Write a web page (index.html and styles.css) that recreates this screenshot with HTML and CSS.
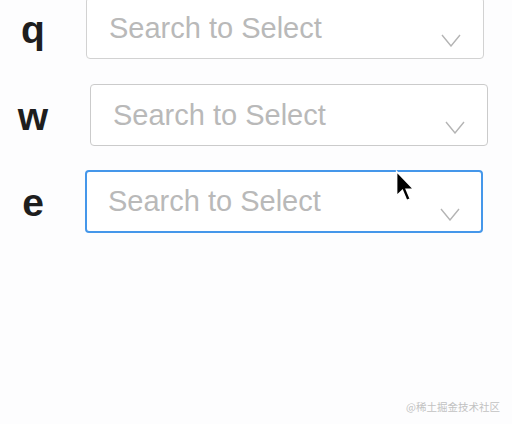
FILE: index.html
```html
<!DOCTYPE html>
<html lang="en">
<head>
<meta charset="utf-8">
<title>Search to Select</title>
<link rel="stylesheet" href="styles.css">
</head>
<body>
<div class="form">
  <div class="row">
    <div class="label">q</div>
    <div class="select select-a">
      <span class="placeholder">Search to Select</span>
      <svg class="arrow" width="20" height="13" viewBox="0 0 20 13"><path d="M1 1 L10 12 L19 1" fill="none" stroke="#b4b4b4" stroke-width="1.4"/></svg>
    </div>
  </div>
  <div class="row row-b">
    <div class="label">w</div>
    <div class="select select-b">
      <span class="placeholder">Search to Select</span>
      <svg class="arrow" width="20" height="13" viewBox="0 0 20 13"><path d="M1 1 L10 12 L19 1" fill="none" stroke="#b4b4b4" stroke-width="1.4"/></svg>
    </div>
  </div>
  <div class="row">
    <div class="label">e</div>
    <div class="select select-c focused">
      <span class="placeholder">Search to Select</span>
      <svg class="arrow" width="20" height="13" viewBox="0 0 20 13"><path d="M1 1 L10 12 L19 1" fill="none" stroke="#b4b4b4" stroke-width="1.4"/></svg>
    </div>
  </div>
</div>
<svg class="cursor" width="20" height="32" viewBox="0 0 13 21"><path d="M1 1 L1 17 L4.8 13.4 L7.6 20 L10 19 L7.3 12.6 L12.2 12.6 Z" fill="#000" stroke="#fff" stroke-width="1"/></svg>
<div class="watermark">@稀土掘金技术社区</div>
</body>
</html>
```
FILE: styles.css
```css
html, body {
  margin: 0;
  padding: 0;
  background: #fdfdfe;
  width: 512px;
  height: 424px;
  overflow: hidden;
  font-family: "Liberation Sans", Arial, sans-serif;
}
.form {
  display: flex;
  flex-direction: column;
  gap: 24px;
  margin-top: -3px;
}
.row {
  display: flex;
  align-items: center;
  height: 62px;
}
.row-b { margin-top: 1px; }
.label {
  width: 66px;
  text-align: center;
  font-size: 39px;
  font-weight: bold;
  color: #1e1e1e;
  padding-top: 4px;
}
.select {
  position: relative;
  box-sizing: border-box;
  width: 398px;
  height: 62px;
  border: 1px solid #d2d2d2;
  border-radius: 4px;
  background: #fff;
  display: flex;
  align-items: center;
  padding-left: 22px;
}
.select-a { margin-left: 20px; }
.select-b { margin-left: 24px; border-color: #cbcbcb; }
.select-c { margin-left: 19px; height: 63px; }
.focused {
  border: 2px solid #4597ea;
  padding-left: 21px;
}
.placeholder {
  font-size: 29px;
  color: #b9b9b9;
  line-height: 1;
}
.arrow {
  position: absolute;
  right: 22px;
  bottom: 11px;
}
.focused .arrow { right: 21px; bottom: 10px; }
.cursor {
  position: absolute;
  left: 395px;
  top: 170px;
}
.watermark {
  position: absolute;
  right: 12px;
  top: 399px;
  font-family: "Noto Sans CJK SC", sans-serif;
  font-size: 10.5px;
  color: #c2c2c2;
}
```
